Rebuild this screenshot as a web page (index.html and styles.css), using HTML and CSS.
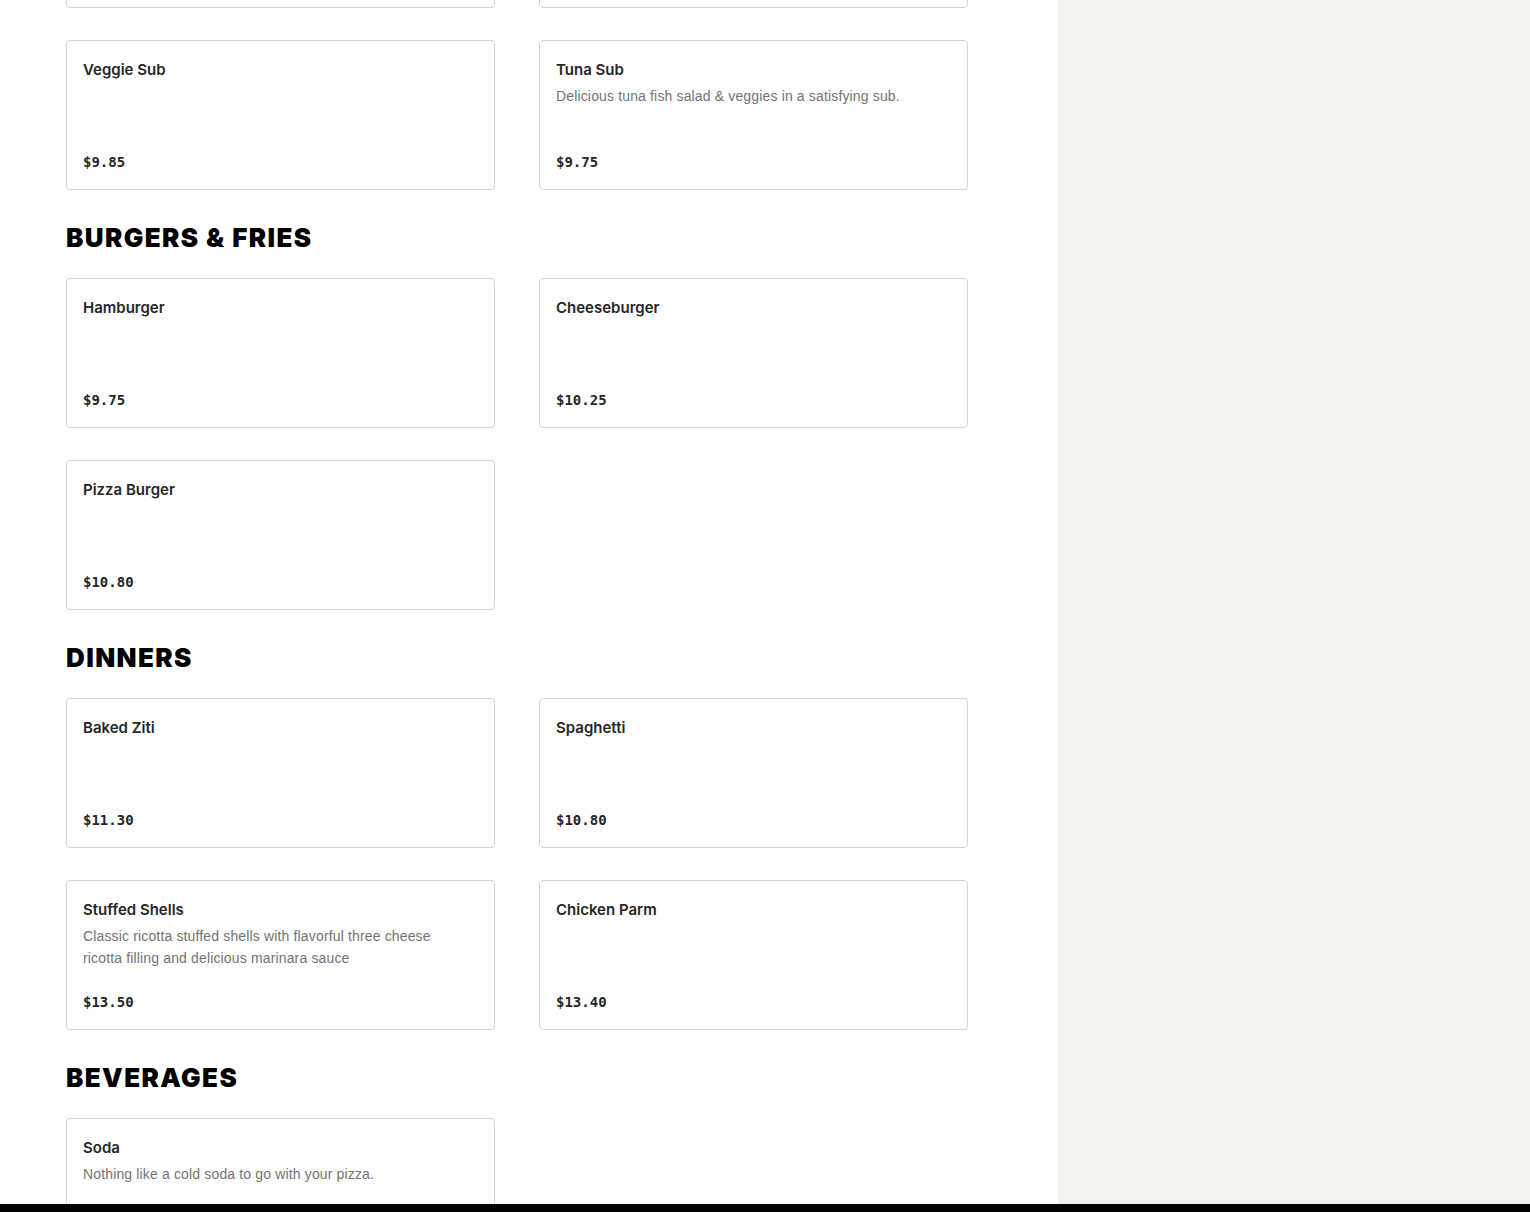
FILE: index.html
```html
<!DOCTYPE html>
<html lang="en">
<head>
<meta charset="utf-8">
<title>Menu</title>
<link rel="stylesheet" href="styles.css">
</head>
<body>
<div class="page">
  <main class="menu">
    <div class="list">
      <section class="section">
        <div class="grid">
          <div class="card"><div class="name">Italian Sub</div><div class="price">$10.25</div></div>
          <div class="card"><div class="name">Meatball Sub</div><div class="price">$10.25</div></div>
          <div class="card"><div class="name">Veggie Sub</div><div class="price">$9.85</div></div>
          <div class="card"><div class="name">Tuna Sub</div><div class="desc">Delicious tuna fish salad &amp; veggies in a satisfying sub.</div><div class="price">$9.75</div></div>
        </div>
      </section>
      <section class="section">
        <h2 class="heading">BURGERS &amp; FRIES</h2>
        <div class="grid">
          <div class="card"><div class="name">Hamburger</div><div class="price">$9.75</div></div>
          <div class="card"><div class="name">Cheeseburger</div><div class="price">$10.25</div></div>
          <div class="card"><div class="name">Pizza Burger</div><div class="price">$10.80</div></div>
        </div>
      </section>
      <section class="section">
        <h2 class="heading">DINNERS</h2>
        <div class="grid">
          <div class="card"><div class="name">Baked Ziti</div><div class="price">$11.30</div></div>
          <div class="card"><div class="name">Spaghetti</div><div class="price">$10.80</div></div>
          <div class="card"><div class="name">Stuffed Shells</div><div class="desc">Classic ricotta stuffed shells with flavorful three cheese ricotta filling and delicious marinara sauce</div><div class="price">$13.50</div></div>
          <div class="card"><div class="name">Chicken Parm</div><div class="price">$13.40</div></div>
        </div>
      </section>
      <section class="section">
        <h2 class="heading">BEVERAGES</h2>
        <div class="grid">
          <div class="card"><div class="name">Soda</div><div class="desc">Nothing like a cold soda to go with your pizza.</div><div class="price">$2.50</div></div>
        </div>
      </section>
    </div>
  </main>
  <aside class="side"></aside>
</div>
<div class="bottom-bar"></div>
</body>
</html>
```
FILE: styles.css
```css
html, body {
  margin: 0;
  padding: 0;
  height: 100%;
  overflow: hidden;
}
body {
  font-family: "Liberation Sans", Arial, sans-serif;
  color: #1f1f1f;
  background: #ffffff;
}
.page {
  display: flex;
  height: 1212px;
  overflow: hidden;
}
.menu {
  width: 1058px;
  flex: none;
  background: #ffffff;
  padding: 0 90px 0 66px;
  box-sizing: border-box;
}
.list {
  margin-top: -142px;
  display: flex;
  flex-direction: column;
  gap: 32px;
}
.side {
  flex: 1;
  background: #f3f2ee;
}
.heading {
  margin: 0 0 24px;
  font-family: "Inter", "Liberation Sans", sans-serif;
  font-weight: 900;
  font-size: 26px;
  line-height: 32px;
  color: #000;
  letter-spacing: 1.4px;
}
.grid {
  display: grid;
  grid-template-columns: 429px 429px;
  column-gap: 44px;
  row-gap: 32px;
}
.card {
  box-sizing: border-box;
  height: 150px;
  border: 1px solid #d3d3d3;
  border-radius: 4px;
  padding: 17px 24px 17px 16px;
  display: flex;
  flex-direction: column;
  background: #fff;
}
.name {
  font-family: "Inter", "Liberation Sans", sans-serif;
  font-size: 15px;
  line-height: 24px;
  font-weight: 600;
  color: #262626;
}
.desc {
  margin-top: 3px;
  font-size: 14px;
  line-height: 22px;
  letter-spacing: 0.15px;
  color: #737373;
}
.price {
  margin-top: auto;
  font-family: "DejaVu Sans Mono", "Liberation Mono", monospace;
  font-weight: 700;
  font-size: 14px;
  line-height: 20px;
  color: #262626;
}
.bottom-bar {
  position: fixed;
  left: 0;
  right: 0;
  bottom: 0;
  height: 8px;
  background: #000;
}
```
